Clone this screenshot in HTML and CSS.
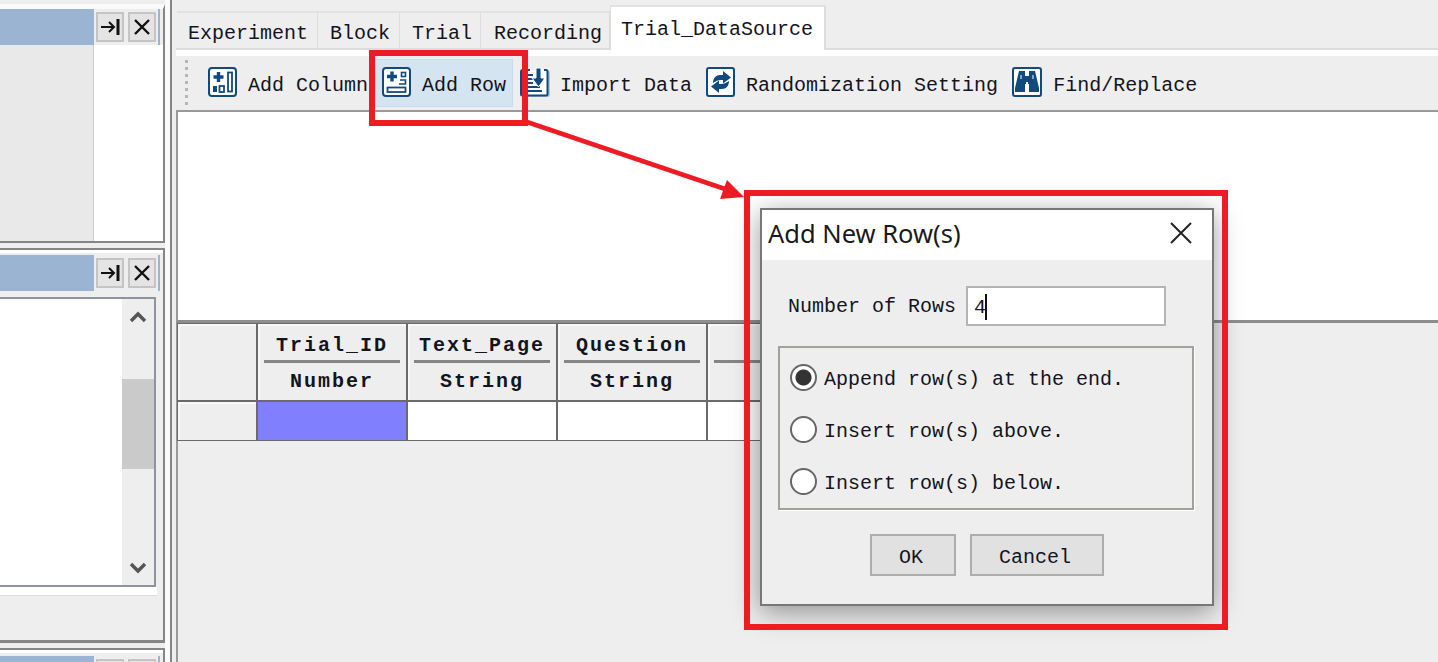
FILE: index.html
```html
<!DOCTYPE html>
<html lang="en">
<head>
    <meta charset="UTF-8">
    <meta name="viewport" content="width=device-width, initial-scale=1.0">
    <title>Trial_DataSource</title>
    <link rel="stylesheet" href="styles.css">
</head>
<body>

<div class="app">
    <div class="side">
        <div class="panel panel-top">
            <div class="dock-title">
                <div class="dock-fill"></div>
                <div class="dock-btns">
                    <button class="dock-btn"><svg width="20" height="20" viewBox="0 0 20 20"><path d="M1 10H14M9 5l5 5-5 5" fill="none" stroke="#111" stroke-width="2"/><path d="M18 2V18" stroke="#111" stroke-width="3"/></svg></button>
                    <button class="dock-btn"><svg width="18" height="18" viewBox="0 0 18 18"><path d="M2 2L16 16M16 2L2 16" stroke="#111" stroke-width="2.4"/></svg></button>
                </div>
            </div>
            <div class="panel-split">
                <div class="split-grey"></div>
                <div class="split-white"></div>
            </div>
        </div>

        <div class="panel panel-mid">
            <div class="dock-title">
                <div class="dock-fill"></div>
                <div class="dock-btns">
                    <button class="dock-btn"><svg width="20" height="20" viewBox="0 0 20 20"><path d="M1 10H14M9 5l5 5-5 5" fill="none" stroke="#111" stroke-width="2"/><path d="M18 2V18" stroke="#111" stroke-width="3"/></svg></button>
                    <button class="dock-btn"><svg width="18" height="18" viewBox="0 0 18 18"><path d="M2 2L16 16M16 2L2 16" stroke="#111" stroke-width="2.4"/></svg></button>
                </div>
            </div>
            <div class="list-box">
                <div class="list-body"></div>
                <div class="scrollbar">
                    <svg class="chev" width="18" height="14" viewBox="0 0 18 14"><path d="M2 11L9 4l7 7" fill="none" stroke="#555" stroke-width="3.4"/></svg>
                    <div class="thumb"></div>
                    <svg class="chev chev-down" width="18" height="14" viewBox="0 0 18 14"><path d="M2 3l7 7 7-7" fill="none" stroke="#555" stroke-width="3.4"/></svg>
                </div>
            </div>
            <div class="list-strip"></div>
        </div>

        <div class="panel panel-low">
            <div class="dock-title">
                <div class="dock-fill"></div>
                <div class="dock-btns">
                    <button class="dock-btn"></button>
                    <button class="dock-btn"></button>
                </div>
            </div>
        </div>
    </div>

    <div class="splitter"></div>

    <div class="main">
        <div class="tabs">
            <div class="tab">Experiment</div>
            <div class="tab">Block</div>
            <div class="tab">Trial</div>
            <div class="tab">Recording</div>
            <div class="tab tab-active">Trial_DataSource</div>
        </div>
        <div class="tab-gap"></div>

        <div class="toolbar">
            <div class="grip"></div>
            <div class="tool">
                <svg class="tool-icon" viewBox="0 0 30 30">
                    <rect x="2" y="2" width="27" height="28" rx="3" fill="#b8c4d2"/>
                    <rect x="1" y="1" width="27" height="28" rx="3" fill="#fff" stroke="#114a7e" stroke-width="2"/>
                    <path d="M10.500 5v10M5.500 10h10" stroke="#114a7e" stroke-width="3.400"/>
                    <rect x="20" y="5.500" width="4" height="19" fill="none" stroke="#114a7e" stroke-width="1.800"/>
                    <rect x="5" y="19" width="4" height="6" fill="#114a7e"/>
                    <rect x="11.500" y="19" width="4.500" height="6" fill="none" stroke="#114a7e" stroke-width="1.800"/>
                </svg>
                <span>Add Column</span>
            </div>
            <div class="tool tool-hover">
                <svg class="tool-icon" viewBox="0 0 30 30">
                    <rect x="2" y="2" width="27" height="28" rx="3" fill="#b8c4d2"/>
                    <rect x="1" y="1" width="27" height="28" rx="3" fill="#fff" stroke="#114a7e" stroke-width="2"/>
                    <path d="M10 4.500v10M5 9.500h10" stroke="#114a7e" stroke-width="3.400"/>
                    <rect x="19.500" y="5.500" width="4" height="4" fill="none" stroke="#114a7e" stroke-width="1.600"/>
                    <path d="M18 13h5.500v4H17" fill="none" stroke="#114a7e" stroke-width="1.600"/>
                    <rect x="5.500" y="20.500" width="18" height="4.500" fill="none" stroke="#114a7e" stroke-width="1.800"/>
                </svg>
                <span>Add Row</span>
            </div>
            <div class="tool">
                <svg class="tool-icon" viewBox="0 0 30 30">
                    <rect x="2" y="4" width="28" height="26" rx="2" fill="#b8c4d2"/>
                    <path d="M10 3H2.500a1.500 1.500 0 0 0-1.500 1.500V27a1.500 1.500 0 0 0 1.500 1.500H26a1.500 1.500 0 0 0 1.500-1.500V4.500A1.500 1.500 0 0 0 26 3h-2" fill="#fff" stroke="#114a7e" stroke-width="2"/>
                    <path d="M8 8h5M8 12h5M8 16h5M8 20h12M8 24h14M5 8h1M5 12h1M5 16h1M5 20h1" stroke="#114a7e" stroke-width="2"/>
                    <path d="M16 1h5v10h4l-6.500 9L12 11h4z" fill="#114a7e" stroke="#fff" stroke-width="1"/>
                </svg>
                <span>Import Data</span>
            </div>
            <div class="tool">
                <svg class="tool-icon" viewBox="0 0 30 30">
                    <rect x="2" y="2" width="27" height="28" rx="3" fill="#b8c4d2"/>
                    <rect x="1" y="1" width="27" height="28" rx="2" fill="#fff" stroke="#114a7e" stroke-width="2"/>
                    <path d="M7 16c0-5 3-8 7-8h3V4l8 6.500-8 6V13h-2c-3 0-5 1-8 3z" fill="#114a7e"/>
                    <path d="M23 14c0 5-3 8-7 8h-3v4l-8-6.500 8-6V17h2c3 0 5-1 8-3z" fill="#114a7e"/>
                </svg>
                <span>Randomization Setting</span>
            </div>
            <div class="tool">
                <svg class="tool-icon" viewBox="0 0 30 30">
                    <rect x="2" y="2" width="28" height="28" rx="2" fill="#b8c4d2"/>
                    <rect x="1" y="1" width="28" height="28" rx="2" fill="#fff" stroke="#114a7e" stroke-width="2"/>
                    <path d="M7 4h6v5h4V4h6l4 17v4H17v-8h-1v-2h-2v2h-1v8H3v-4z" fill="#114a7e"/>
                    <path d="M9 8v4M21 8v4" stroke="#fff" stroke-width="1"/>
                </svg>
                <span class="tool-last">Find/Replace</span>
            </div>
        </div>

        <div class="canvas"></div>

        <div class="grid">
            <div class="cell corner"></div>
            <div class="cell col-head"><div class="col-name">Trial_ID</div><div class="col-type">Number</div></div>
            <div class="cell col-head"><div class="col-name">Text_Page</div><div class="col-type">String</div></div>
            <div class="cell col-head"><div class="col-name">Question</div><div class="col-type">String</div></div>
            <div class="cell col-head"><div class="col-name">&nbsp;</div><div class="col-type">&nbsp;</div></div>
            <div class="cell row-head"></div>
            <div class="cell cell-selected"></div>
            <div class="cell"></div>
            <div class="cell"></div>
            <div class="cell"></div>
        </div>
    </div>
</div>

<!-- annotation layer -->
<svg class="arrow" width="1438" height="662" viewBox="0 0 1438 662">
    <path d="M527 122L728 190" stroke="#ed1c24" stroke-width="4.500"/>
    <path d="M744 197L720 199L727 180z" fill="#ed1c24"/>
</svg>
<div class="mark mark-tool"></div>

<div class="dialog">
    <div class="dialog-title">
        <span>Add New Row(s)</span>
        <svg width="24" height="24" viewBox="0 0 24 24"><path d="M2 2L22 22M22 2L2 22" stroke="#222" stroke-width="2"/></svg>
    </div>
    <div class="dialog-body">
        <div class="field">
            <label class="field-label">Number of Rows</label>
            <div class="field-input">4<i class="caret"></i></div>
        </div>
        <div class="group">
            <label class="option"><input type="radio" name="pos" checked><span>Append row(s) at the end.</span></label>
            <label class="option"><input type="radio" name="pos"><span>Insert row(s) above.</span></label>
            <label class="option"><input type="radio" name="pos"><span>Insert row(s) below.</span></label>
        </div>
        <div class="actions">
            <button class="btn btn-ok">OK</button>
            <button class="btn btn-cancel">Cancel</button>
        </div>
    </div>
</div>
<div class="mark mark-dialog"></div>

</body>
</html>
```

FILE: styles.css
```css
html, body {
    margin: 0;
    height: 662px;
    overflow: hidden;
}
body {
    position: relative;
    background-color: #eee;
    font-family: "Liberation Mono", monospace;
    font-size: 20px;
    color: #14141e;
}
.app {
    display: flex;
    height: 662px;
}

/* left docks */
.side {
    width: 165px;
    flex-shrink: 0;
    padding-top: 4px;
    box-sizing: border-box;
}
.panel {
    box-sizing: border-box;
    border-right: 2px solid #858585;
    margin-bottom: 5px;
}
.panel-top {
    height: 239px;
    border-top: 5px solid #fafafa;
    border-bottom: 2px solid #858585;
    display: flex;
    flex-direction: column;
}
.panel-mid {
    height: 395px;
    border-top: 2px solid #858585;
    border-bottom: 3px solid #858585;
    padding-top: 5px;
    box-shadow: inset 0 3px 0 #fff;
}
.panel-low {
    height: 40px;
    border-top: 2px solid #858585;
    padding-top: 6px;
    margin-bottom: 0;
    box-shadow: inset 0 3px 0 #fff;
}
.dock-title {
    display: flex;
    width: 160px;
    height: 36px;
    flex-shrink: 0;
    background-color: #9ab4d2;
}
.dock-fill {
    width: 94px;
}
.dock-btns {
    width: 64px;
    display: flex;
    gap: 4px;
    padding: 3px 2px 3px 2px;
    box-sizing: border-box;
    background-color: #eee;
}
.dock-btn {
    width: 28px;
    height: 30px;
    padding: 0;
    border: 2px solid #c4c4c4;
    background-color: #e4e4e4;
    display: flex;
    align-items: center;
    justify-content: center;
}
.panel-split {
    flex: 1;
    display: flex;
}
.split-grey {
    width: 93px;
    background-color: #e9e9e9;
}
.split-white {
    flex: 1;
    background-color: #fff;
    border-left: 1px solid #ccc;
}
.list-box {
    display: flex;
    width: 156px;
    height: 290px;
    margin-top: 6px;
    box-sizing: border-box;
    border-top: 2px solid #8e93a0;
    border-right: 2px solid #8e93a0;
    border-bottom: 2px solid #8e93a0;
}
.list-body {
    width: 122px;
    background-color: #fff;
}
.scrollbar {
    flex: 1;
    display: flex;
    flex-direction: column;
    align-items: center;
    background-color: #eee;
}
.chev {
    margin-top: 11px;
}
.chev-down {
    margin-top: 92px;
}
.thumb {
    width: 100%;
    height: 90px;
    margin-top: 55px;
    background-color: #cacaca;
}
.list-strip {
    width: 157px;
    height: 8px;
    background-color: #fff;
    border-bottom: 1px solid #ddd;
}

.splitter {
    width: 5px;
    flex-shrink: 0;
    background-color: #fafafa;
    border-right: 2px solid #858585;
}

/* right side */
.main {
    flex: 1;
    min-width: 0;
    padding-left: 4px;
    display: flex;
    flex-direction: column;
}
.tabs {
    display: flex;
    align-items: flex-end;
    height: 50px;
    padding-left: 1px;
    box-sizing: border-box;
    border-bottom: 2px solid #ddd;
}
.tab {
    height: 37px;
    line-height: 41px;
    padding: 0 8px 0 12px;
    border-top: 2px solid #e2e2e2;
    border-right: 1px solid #ddd;
    box-sizing: border-box;
    background-color: #eee;
}
.tab:nth-child(1) {
    padding: 0 9px 0 11px;
}
.tab:nth-child(2) {
    padding-right: 9px;
}
.tab:nth-child(4) {
    padding: 0 7px 0 13px;
}
.tab.tab-active {
    height: 45px;
    line-height: 45px;
    margin-bottom: -2px;
    background-color: #fff;
    border-left: 1px solid #ddd;
    border-right: 2px solid #ddd;
    padding: 0 11px 0 10px;
}
.tab-gap {
    height: 6px;
    background-color: #fff;
}
.toolbar {
    display: flex;
    align-items: center;
    height: 56px;
    box-sizing: border-box;
    padding-left: 9px;
    border-bottom: 2px solid #999;
}
.grip {
    width: 3px;
    height: 50px;
    margin-right: 13px;
    background-image: radial-gradient(circle, #b5b5b5 1.400px, transparent 1.600px);
    background-size: 3px 7px;
}
.tool {
    display: flex;
    align-items: center;
    gap: 10px;
    height: 48px;
    padding: 0 7px;
    box-sizing: border-box;
}
.tool span {
    padding-top: 4px;
}
.tool-hover {
    background-color: #d5e4f1;
    box-shadow: inset 0 0 0 1px #c5dcf0;
}
.tool-icon {
    width: 30px;
    height: 30px;
    flex-shrink: 0;
    margin-top: -2px;
}
.tool-last {
    margin-left: 1px;
}
.canvas {
    height: 208px;
    background-color: #fff;
    border-left: 2px solid #999;
    border-bottom: 3px solid #8d8d8d;
}
.grid {
    flex: 1;
    display: grid;
    grid-template-columns: 78px repeat(4, 148px);
    grid-template-rows: 76px 38px;
    gap: 2px;
    align-content: start;
    justify-content: start;
    padding-top: 1px;
    border-left: 2px solid #999;
}
.cell {
    background-color: #fff;
    box-shadow: 0 0 0 1px #6a6a6a;
}
.corner, .col-head, .row-head {
    background-color: #eee;
    box-shadow: 0 0 0 1px #6a6a6a, inset 2px 2px 0 #f8f8f8;
}
.col-head {
    font-weight: bold;
    letter-spacing: 2px;
    text-align: center;
    padding: 0 6px;
}
.col-name {
    height: 36px;
    line-height: 43px;
    border-bottom: 3px solid #858585;
}
.col-type {
    line-height: 38px;
}
.cell-selected {
    background-color: #8080ff;
}

/* annotation + dialog */
.arrow {
    position: absolute;
    left: 0;
    top: 0;
}
.mark {
    position: absolute;
    box-sizing: border-box;
    border: 6px solid #ed1c24;
}
.mark-tool {
    left: 369px;
    top: 50px;
    width: 159px;
    height: 76px;
}
.mark-dialog {
    left: 744px;
    top: 190px;
    width: 484px;
    height: 440px;
}
.dialog {
    position: absolute;
    left: 760px;
    top: 208px;
    width: 454px;
    height: 398px;
    box-sizing: border-box;
    border: 2px solid #777;
    background-color: #eee;
    box-shadow: 0 6px 26px rgba(0, 0, 0, 0.4);
}
.dialog-title {
    display: flex;
    align-items: center;
    justify-content: space-between;
    height: 50px;
    padding: 0 19px 4px 6px;
    box-sizing: border-box;
    background-color: #fff;
    font-family: "Noto Sans", sans-serif;
    font-size: 25.500px;
    color: #1a1a1a;
}
.dialog-body {
    padding: 26px 16px 0;
}
.field {
    display: flex;
    align-items: center;
    gap: 10px;
    padding-left: 10px;
}
.field-label {
    width: 168px;
    white-space: nowrap;
}
.field-input {
    width: 200px;
    height: 40px;
    line-height: 40px;
    padding-left: 6px;
    box-sizing: border-box;
    border: 2px solid #b4b4b4;
    background-color: #fff;
    display: flex;
}
.caret {
    width: 2px;
    height: 26px;
    margin: 6px 0 0 -1px;
    background-color: #111;
}
.group {
    width: 416px;
    height: 164px;
    margin-top: 20px;
    padding: 3px 0 0 10px;
    box-sizing: border-box;
    border: 2px solid #a0a09c;
    box-shadow: 1px 1px 0 #fff;
}
.option {
    display: flex;
    align-items: center;
    height: 52px;
}
.option span {
    padding-top: 4px;
}
.option input {
    appearance: none;
    width: 27px;
    height: 27px;
    margin: 0 7px 0 0;
    border: 2px solid #666;
    border-radius: 50%;
    background-color: #fff;
}
.option input:checked {
    background: radial-gradient(circle, #333 0 7.500px, #fff 8.500px);
}
.actions {
    display: flex;
    justify-content: center;
    gap: 14px;
    margin-top: 24px;
}
.btn {
    height: 42px;
    padding: 4px 4px 0 0;
    border: 2px solid #adadad;
    background-color: #e1e1e1;
    font-family: inherit;
    font-size: 20px;
    color: #14141e;
}
.btn-ok {
    width: 86px;
}
.btn-cancel {
    width: 134px;
}
```
